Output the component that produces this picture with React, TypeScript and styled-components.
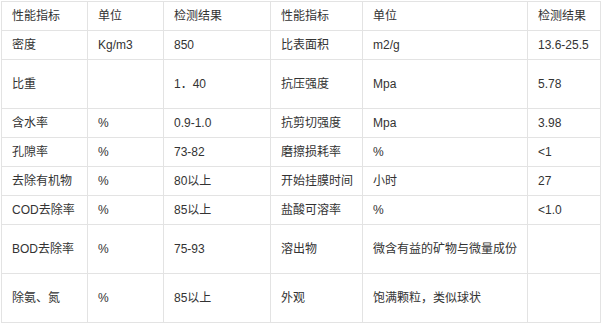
import styled, { createGlobalStyle } from 'styled-components';

const GlobalStyle = createGlobalStyle`
    body {
        margin: 0;
        background: #fff;
        font-family: "Liberation Sans", Arial, "Noto Sans CJK SC", sans-serif;
    }
`;

const Wrap = styled.div`
    padding: 1px 0 0 1px;
`;

const Table = styled.table`
    width: 600px;
    border-collapse: collapse;
    table-layout: fixed;
    font-size: 12px;
    color: #333;
`;

const Row = styled.tr<{ $tall?: boolean }>`
    height: ${(p) => (p.$tall ? '49px' : '29px')};
`;

const Cell = styled.td`
    border: 1px solid #e3e3e3;
    padding: 0 10px;
    vertical-align: middle;
    line-height: 16px;
    white-space: nowrap;
`;

const cols = [86, 76, 107, 92, 165, 73];

const rows: { tall?: boolean; cells: string[] }[] = [
    { cells: ['性能指标', '单位', '检测结果', '性能指标', '单位', '检测结果'] },
    { cells: ['密度', 'Kg/m3', '850', '比表面积', 'm2/g', '13.6-25.5'] },
    { tall: true, cells: ['比重', '', '1．40', '抗压强度', 'Mpa', '5.78'] },
    { cells: ['含水率', '%', '0.9-1.0', '抗剪切强度', 'Mpa', '3.98'] },
    { cells: ['孔隙率', '%', '73-82', '磨擦损耗率', '%', '<1'] },
    { cells: ['去除有机物', '%', '80以上', '开始挂膜时间', '小时', '27'] },
    { cells: ['COD去除率', '%', '85以上', '盐酸可溶率', '%', '<1.0'] },
    { tall: true, cells: ['BOD去除率', '%', '75-93', '溶出物', '微含有益的矿物与微量成份', ''] },
    { tall: true, cells: ['除氨、氮', '%', '85以上', '外观', '饱满颗粒，类似球状', ''] },
];

const App = () => {
    return (
        <>
            <GlobalStyle />
            <Wrap>
                <Table>
                    <colgroup>
                        {cols.map((w, i) => (
                            <col key={i} style={{ width: w }} />
                        ))}
                    </colgroup>
                    <tbody>
                        {rows.map((r, i) => (
                            <Row key={i} $tall={r.tall}>
                                {r.cells.map((c, j) => (
                                    <Cell key={j}>{c}</Cell>
                                ))}
                            </Row>
                        ))}
                    </tbody>
                </Table>
            </Wrap>
        </>
    );
};
export default App;
